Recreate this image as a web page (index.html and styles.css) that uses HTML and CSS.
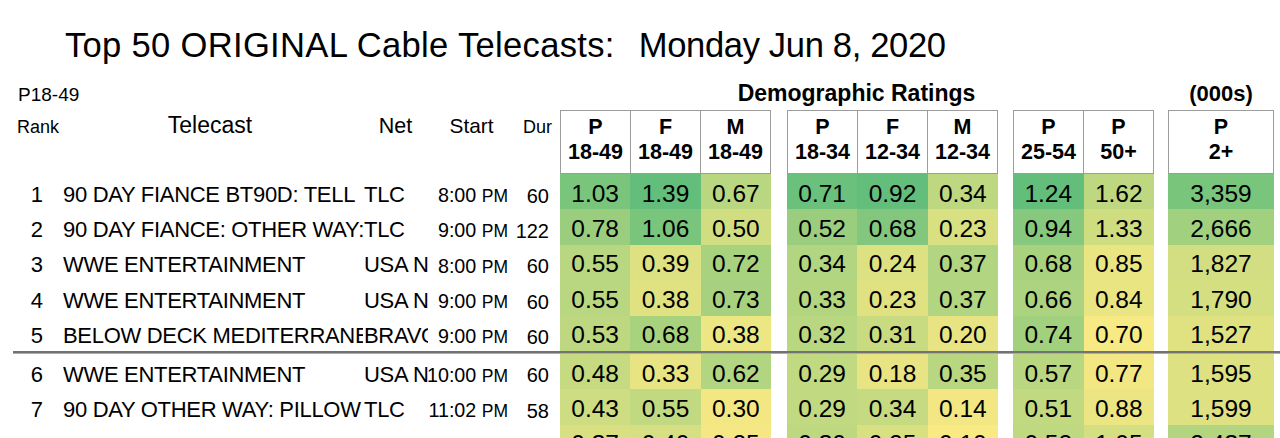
FILE: index.html
```html
<!DOCTYPE html>
<html lang="en">
<head>
<meta charset="utf-8">
<title>Top 50 ORIGINAL Cable Telecasts</title>
<link rel="stylesheet" href="styles.css">
</head>
<body>
<div class="sheet">
  <h1 class="title"><span class="lead">Top 50 ORIGINAL Cable Telecasts:</span><span class="date">Monday Jun 8, 2020</span></h1>

  <div class="super">
    <div class="sample">P18-49</div>
    <div class="demo">Demographic Ratings</div>
    <div class="k">(000s)</div>
  </div>

  <div class="head">
    <div class="hleft">
      <div class="h-rank">Rank</div>
      <div class="h-tele">Telecast</div>
      <div class="h-net">Net</div>
      <div class="h-start">Start</div>
      <div class="h-dur">Dur</div>
    </div>
    <div class="hgrp g1">
      <div class="hcell">P<br>18-49</div>
      <div class="hcell">F<br>18-49</div>
      <div class="hcell">M<br>18-49</div>
    </div>
    <div class="hgrp g2">
      <div class="hcell">P<br>18-34</div>
      <div class="hcell">F<br>12-34</div>
      <div class="hcell">M<br>12-34</div>
    </div>
    <div class="hgrp g3">
      <div class="hcell">P<br>25-54</div>
      <div class="hcell">P<br>50+</div>
    </div>
    <div class="hgrp g4">
      <div class="hcell wide">P<br>2+</div>
    </div>
  </div>

  <div class="row">
    <div class="c rank">1</div>
    <div class="c name">90 DAY FIANCE BT90D: TELL</div>
    <div class="c net">TLC</div>
    <div class="c start"><span>8:00 <span class="pm">PM</span></span></div>
    <div class="c dur">60</div>
    <div class="dg g1"><div class="v" style="background:#7ac57c">1.03</div><div class="v" style="background:#63be7b">1.39</div><div class="v" style="background:#b9d780">0.67</div></div>
    <div class="dg g2"><div class="v" style="background:#6bc07b">0.71</div><div class="v" style="background:#63be7b">0.92</div><div class="v" style="background:#bdd880">0.34</div></div>
    <div class="dg g3"><div class="v" style="background:#63be7b">1.24</div><div class="v" style="background:#bdd880">1.62</div></div>
    <div class="dg g4"><div class="v" style="background:#7ac57c">3,359</div></div>
  </div>

  <div class="row">
    <div class="c rank">2</div>
    <div class="c name">90 DAY FIANCE: OTHER WAY:</div>
    <div class="c net">TLC</div>
    <div class="c start"><span>9:00 <span class="pm">PM</span></span></div>
    <div class="c dur">122</div>
    <div class="dg g1"><div class="v" style="background:#9ace7e">0.78</div><div class="v" style="background:#7ac57c">1.06</div><div class="v" style="background:#d0de81">0.50</div></div>
    <div class="dg g2"><div class="v" style="background:#9ace7e">0.52</div><div class="v" style="background:#82c77d">0.68</div><div class="v" style="background:#d8e082">0.23</div></div>
    <div class="dg g3"><div class="v" style="background:#86c87d">0.94</div><div class="v" style="background:#cfdd81">1.33</div></div>
    <div class="dg g4"><div class="v" style="background:#a1d07f">2,666</div></div>
  </div>

  <div class="row">
    <div class="c rank">3</div>
    <div class="c name">WWE ENTERTAINMENT</div>
    <div class="c net">USA N</div>
    <div class="c start"><span>8:00 <span class="pm">PM</span></span></div>
    <div class="c dur">60</div>
    <div class="dg g1"><div class="v" style="background:#b9d780">0.55</div><div class="v" style="background:#dde182">0.39</div><div class="v" style="background:#a9d27f">0.72</div></div>
    <div class="dg g2"><div class="v" style="background:#b1d580">0.34</div><div class="v" style="background:#dde182">0.24</div><div class="v" style="background:#b1d580">0.37</div></div>
    <div class="dg g3"><div class="v" style="background:#a9d27f">0.68</div><div class="v" style="background:#eae583">0.85</div></div>
    <div class="dg g4"><div class="v" style="background:#d2de81">1,827</div></div>
  </div>

  <div class="row">
    <div class="c rank">4</div>
    <div class="c name">WWE ENTERTAINMENT</div>
    <div class="c net">USA N</div>
    <div class="c start"><span>9:00 <span class="pm">PM</span></span></div>
    <div class="c dur">60</div>
    <div class="dg g1"><div class="v" style="background:#b9d780">0.55</div><div class="v" style="background:#e0e282">0.38</div><div class="v" style="background:#a7d17f">0.73</div></div>
    <div class="dg g2"><div class="v" style="background:#b4d580">0.33</div><div class="v" style="background:#e0e282">0.23</div><div class="v" style="background:#b1d580">0.37</div></div>
    <div class="dg g3"><div class="v" style="background:#acd37f">0.66</div><div class="v" style="background:#eae583">0.84</div></div>
    <div class="dg g4"><div class="v" style="background:#d4df81">1,790</div></div>
  </div>

  <div class="row">
    <div class="c rank">5</div>
    <div class="c name">BELOW DECK MEDITERRANEAN</div>
    <div class="c net">BRAVO</div>
    <div class="c start"><span>9:00 <span class="pm">PM</span></span></div>
    <div class="c dur">60</div>
    <div class="dg g1"><div class="v" style="background:#bdd880">0.53</div><div class="v" style="background:#a9d27f">0.68</div><div class="v" style="background:#ece683">0.38</div></div>
    <div class="dg g2"><div class="v" style="background:#b9d780">0.32</div><div class="v" style="background:#c8db81">0.31</div><div class="v" style="background:#e8e483">0.20</div></div>
    <div class="dg g3"><div class="v" style="background:#a1d07f">0.74</div><div class="v" style="background:#f7e984">0.70</div></div>
    <div class="dg g4"><div class="v" style="background:#e0e282">1,527</div></div>
  </div>

  <div class="sep"></div>

  <div class="row">
    <div class="c rank">6</div>
    <div class="c name">WWE ENTERTAINMENT</div>
    <div class="c net">USA N</div>
    <div class="c start"><span>10:00 <span class="pm">PM</span></span></div>
    <div class="c dur">60</div>
    <div class="dg g1"><div class="v" style="background:#c5da81">0.48</div><div class="v" style="background:#e8e483">0.33</div><div class="v" style="background:#b1d580">0.62</div></div>
    <div class="dg g2"><div class="v" style="background:#c1d980">0.29</div><div class="v" style="background:#e8e483">0.18</div><div class="v" style="background:#b9d780">0.35</div></div>
    <div class="dg g3"><div class="v" style="background:#b9d780">0.57</div><div class="v" style="background:#f3e783">0.77</div></div>
    <div class="dg g4"><div class="v" style="background:#dde182">1,595</div></div>
  </div>

  <div class="row">
    <div class="c rank">7</div>
    <div class="c name">90 DAY OTHER WAY: PILLOW</div>
    <div class="c net">TLC</div>
    <div class="c start"><span>11:02 <span class="pm">PM</span></span></div>
    <div class="c dur">58</div>
    <div class="dg g1"><div class="v" style="background:#cedd81">0.43</div><div class="v" style="background:#c1d980">0.55</div><div class="v" style="background:#f3e783">0.30</div></div>
    <div class="dg g2"><div class="v" style="background:#c1d980">0.29</div><div class="v" style="background:#c5da81">0.34</div><div class="v" style="background:#f3e783">0.14</div></div>
    <div class="dg g3"><div class="v" style="background:#c1d980">0.51</div><div class="v" style="background:#ebe583">0.88</div></div>
    <div class="dg g4"><div class="v" style="background:#dde182">1,599</div></div>
  </div>

  <div class="row">
    <div class="c rank"></div>
    <div class="c name"></div>
    <div class="c net"></div>
    <div class="c start"></div>
    <div class="c dur"></div>
    <div class="dg g1"><div class="v" style="background:#d8e082">0.37</div><div class="v" style="background:#d6df82">0.40</div><div class="v" style="background:#f5e884">0.25</div></div>
    <div class="dg g2"><div class="v" style="background:#bdd880">0.30</div><div class="v" style="background:#d8e082">0.25</div><div class="v" style="background:#f9ea84">0.10</div></div>
    <div class="dg g3"><div class="v" style="background:#bfd980">0.52</div><div class="v" style="background:#d4df81">1.05</div></div>
    <div class="dg g4"><div class="v" style="background:#b4d580">2,437</div></div>
  </div>
</div>
</body>
</html>
```

FILE: styles.css
```css
html, body {
  margin: 0;
  padding: 0;
  background: #ffffff;
}

body {
  color: #000000;
  font-family: "Liberation Sans", Arial, sans-serif;
}

.sheet {
  width: 1280px;
  height: 438px;
  overflow: hidden;
}

/* Title */
.title {
  margin: 0;
  padding: 25px 0 0 65px;
  height: 40px;
  line-height: 40px;
  font-size: 34.6px;
  font-weight: normal;
  white-space: nowrap;
}

.title .lead {
  letter-spacing: 0.3px;
}

.title .date {
  margin-left: 24px;
  letter-spacing: -0.35px;
}

/* Super header */
.super {
  display: flex;
  align-items: baseline;
  height: 45px;
  box-sizing: border-box;
  padding-top: 17px;
  line-height: 1;
  white-space: nowrap;
}

.super .sample {
  width: 560px;
  box-sizing: border-box;
  padding-left: 18px;
  font-size: 19px;
}

.super .demo {
  width: 593px;
  text-align: center;
  font-weight: bold;
  font-size: 23px;
}

.super .k {
  width: 106px;
  margin-left: 15px;
  text-align: center;
  font-weight: bold;
  font-size: 22px;
}

/* Column header */
.head {
  display: flex;
  height: 64px;
}

.hleft {
  display: flex;
  align-items: baseline;
  width: 552px;
  height: 64px;
  box-sizing: border-box;
  padding-top: 3.5px;
  line-height: 1;
  white-space: nowrap;
}

.h-rank {
  width: 63px;
  box-sizing: border-box;
  padding-left: 17px;
  font-size: 18px;
}

.h-tele {
  width: 300px;
  box-sizing: border-box;
  padding-right: 6px;
  text-align: center;
  font-size: 23px;
}

.h-net {
  width: 65px;
  text-align: center;
  font-size: 21.5px;
}

.h-start {
  width: 87px;
  text-align: center;
  font-size: 20.8px;
}

.h-dur {
  width: 37px;
  text-align: right;
  font-size: 18px;
}

.hgrp {
  display: flex;
  height: 64px;
  box-sizing: border-box;
  border-top: 1px solid #9c9c9c;
  border-bottom: 1px solid #9c9c9c;
  border-left: 1px solid #9c9c9c;
}

.hcell {
  width: 70px;
  box-sizing: border-box;
  border-right: 1px solid #9c9c9c;
  padding-top: 4px;
  text-align: center;
  font-weight: bold;
  font-size: 21.5px;
  line-height: 25px;
}

.hcell.wide {
  width: 105px;
}

.hgrp.g1, .dg.g1 { margin-left: 8px; }
.hgrp.g2, .dg.g2 { margin-left: 16px; }
.hgrp.g3, .dg.g3 { margin-left: 15px; }
.hgrp.g4, .dg.g4 { margin-left: 14px; }

/* Data rows */
.row {
  display: flex;
  height: 35.4px;
}

.c {
  display: flex;
  align-items: flex-end;
  box-sizing: border-box;
  padding-bottom: 3.7px;
  line-height: 1;
  white-space: nowrap;
  overflow: hidden;
  font-size: 22px;
}

.rank {
  width: 43px;
  justify-content: flex-end;
}

.name {
  width: 300px;
  margin-left: 20px;
  letter-spacing: -0.3px;
}

.net {
  width: 65px;
  padding-left: 1px;
  letter-spacing: -0.3px;
}

.start {
  width: 87px;
  justify-content: flex-end;
  padding-right: 7px;
  padding-bottom: 3.9px;
  overflow: visible;
  font-size: 19.7px;
}

.start .pm {
  font-size: 17.5px;
}

.dur {
  width: 37px;
  justify-content: flex-end;
  padding-right: 3px;
  padding-bottom: 3.9px;
  overflow: visible;
  font-size: 20px;
}

.dg {
  display: flex;
  width: 211px;
}

.dg.g3 {
  width: 141px;
}

.dg.g4 {
  width: 106px;
}

.v {
  flex: 1;
  display: flex;
  align-items: flex-end;
  justify-content: center;
  box-sizing: border-box;
  padding-bottom: 3.2px;
  line-height: 1;
  font-size: 24.5px;
  white-space: nowrap;
}

.sep {
  height: 3px;
  margin-left: 13px;
  background: linear-gradient(#727272 0, #727272 2px, #acacac 2px, #acacac 3px);
}
```
